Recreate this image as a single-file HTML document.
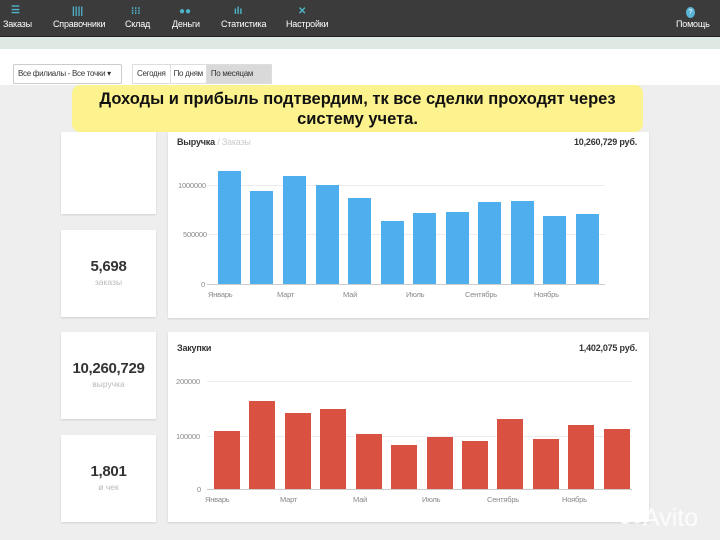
<!DOCTYPE html>
<html><head><meta charset="utf-8"><style>
*{margin:0;padding:0;box-sizing:border-box}
body{width:720px;height:540px;overflow:hidden;background:#eeeeee;font-family:"Liberation Sans",sans-serif;position:relative;color:#333}
.a{position:absolute;white-space:nowrap}
.nav{left:0;top:0;width:720px;height:37px;background:#3b3b3b;border-bottom:1px solid #222}
.ni{position:absolute;top:19px;color:#fff;font-size:9px;white-space:nowrap;letter-spacing:-0.2px}
.ic{position:absolute;top:6px;color:#4fb3c8;font-size:10px;font-weight:bold}
.card{position:absolute;background:#fff;box-shadow:0 1px 2px rgba(0,0,0,.12)}
.big{position:absolute;width:100%;text-align:center;font-weight:bold;font-size:15px;color:#333;letter-spacing:-0.3px}
.sm{position:absolute;width:100%;text-align:center;font-size:8.5px;color:#bbb}
.t{font-size:9px;font-weight:bold;color:#333;letter-spacing:-0.2px}
.ax{position:absolute;font-size:7.5px;color:#888;letter-spacing:-0.2px}
.g{position:absolute;height:1px;background:#ececec}
</style></head><body>
<div class="a nav"></div>
<div class="ic" style="left:11px;top:5px">☰</div><div class="ni" style="left:3px">Заказы</div>
<div class="ic" style="left:72px">||||</div><div class="ni" style="left:53px">Справочники</div>
<div class="ic" style="left:131px">⁝⁝⁝</div><div class="ni" style="left:125px">Склад</div>
<div class="ic" style="left:179px">●●</div><div class="ni" style="left:172px">Деньги</div>
<div class="ic" style="left:234px">ılı</div><div class="ni" style="left:221px">Статистика</div>
<div class="ic" style="left:298px">✕</div><div class="ni" style="left:286px">Настройки</div>
<div class="a" style="left:686px;top:7px;width:9px;height:11px;border-radius:50%;background:#5ab4d6;color:#fff;font-size:7px;text-align:center;line-height:11px">?</div>
<div class="ni" style="left:676px">Помощь</div>
<div class="a" style="left:0;top:37px;width:720px;height:12px;background:#dfe9e4"></div>
<div class="a" style="left:0;top:49px;width:720px;height:36px;background:#fff"></div>
<div class="a" style="left:13px;top:64px;width:109px;height:20px;border:1px solid #ccc;border-radius:2px;font-size:8px;line-height:18px;padding-left:4px;background:#fff;letter-spacing:-0.3px">Все филиалы - Все точки ▾</div>
<div class="a" style="left:132px;top:64px;width:140px;height:20px;border:1px solid #ddd;font-size:8px;line-height:18px;display:flex;letter-spacing:-0.3px">
<span style="padding:0 4px;border-right:1px solid #ddd">Сегодня</span><span style="padding:0 3px;border-right:1px solid #ddd">По дням</span><span style="padding:0 4px;background:#d9d9d9;flex:1">По месяцам</span></div>
<div class="a" style="left:72px;top:85px;width:571px;height:47px;background:#fcf38e;border-radius:8px;text-align:center;font-weight:bold;font-size:16.5px;line-height:20px;padding-top:4px;color:#111">Доходы и прибыль подтвердим, тк все сделки проходят через<br>систему учета.</div>
<div class="card" style="left:61px;top:132px;width:95px;height:82px"></div>
<div class="card" style="left:61px;top:230px;width:95px;height:87px"><div class="big" style="top:28px">5,698</div><div class="sm" style="top:47px">заказы</div></div>
<div class="card" style="left:61px;top:332px;width:95px;height:87px"><div class="big" style="top:28px">10,260,729</div><div class="sm" style="top:47px">выручка</div></div>
<div class="card" style="left:61px;top:435px;width:95px;height:87px"><div class="big" style="top:28px">1,801</div><div class="sm" style="top:47px">ø чек</div></div>
<div class="card" style="left:168px;top:132px;width:481px;height:186px"></div>
<div class="a t" style="left:177px;top:137px">Выручка <span style="color:#ccc;font-weight:normal">/ Заказы</span></div>
<div class="a t" style="left:574px;top:137px">10,260,729 руб.</div>
<div class="g" style="left:207px;top:185px;width:398px"></div>
<div class="g" style="left:207px;top:234px;width:398px"></div>
<div class="a" style="left:207px;top:284px;width:398px;height:1px;background:#ccc"></div>
<div class="ax" style="left:178px;top:181px">1000000</div><div class="ax" style="left:183px;top:230px">500000</div><div class="ax" style="left:201px;top:280px">0</div>
<div class="ax" style="left:208px;top:290px">Январь</div><div class="ax" style="left:277px;top:290px">Март</div><div class="ax" style="left:343px;top:290px">Май</div><div class="ax" style="left:406px;top:290px">Июль</div><div class="ax" style="left:465px;top:290px">Сентябрь</div><div class="ax" style="left:534px;top:290px">Ноябрь</div>
<svg class="a" style="left:0;top:0" width="720" height="540">
<g fill="#4eaeee">
<rect x="218" y="171" width="23" height="113"/><rect x="250" y="191" width="23" height="93"/><rect x="283" y="176" width="23" height="108"/><rect x="316" y="185" width="23" height="99"/><rect x="348" y="198" width="23" height="86"/><rect x="381" y="221" width="23" height="63"/><rect x="413" y="213" width="23" height="71"/><rect x="446" y="212" width="23" height="72"/><rect x="478" y="202" width="23" height="82"/><rect x="511" y="201" width="23" height="83"/><rect x="543" y="216" width="23" height="68"/><rect x="576" y="214" width="23" height="70"/>
</g></svg>
<div class="card" style="left:168px;top:332px;width:481px;height:190px"></div>
<div class="a t" style="left:177px;top:343px">Закупки</div>
<div class="a t" style="left:579px;top:343px">1,402,075 руб.</div>
<div class="g" style="left:207px;top:381px;width:425px"></div>
<div class="g" style="left:207px;top:436px;width:425px"></div>
<div class="a" style="left:207px;top:489px;width:425px;height:1px;background:#ccc"></div>
<div class="ax" style="left:176px;top:377px">200000</div><div class="ax" style="left:176px;top:432px">100000</div><div class="ax" style="left:197px;top:485px">0</div>
<div class="ax" style="left:205px;top:495px">Январь</div><div class="ax" style="left:280px;top:495px">Март</div><div class="ax" style="left:353px;top:495px">Май</div><div class="ax" style="left:422px;top:495px">Июль</div><div class="ax" style="left:487px;top:495px">Сентябрь</div><div class="ax" style="left:562px;top:495px">Ноябрь</div>
<svg class="a" style="left:0;top:0" width="720" height="540">
<g fill="#d85141">
<rect x="214" y="431" width="26" height="58"/><rect x="249" y="401" width="26" height="88"/><rect x="285" y="413" width="26" height="76"/><rect x="320" y="409" width="26" height="80"/><rect x="356" y="434" width="26" height="55"/><rect x="391" y="445" width="26" height="44"/><rect x="427" y="437" width="26" height="52"/><rect x="462" y="441" width="26" height="48"/><rect x="497" y="419" width="26" height="70"/><rect x="533" y="439" width="26" height="50"/><rect x="568" y="425" width="26" height="64"/><rect x="604" y="429" width="26" height="60"/>
</g>
<g fill="#fff" opacity=".85"><circle cx="625" cy="518" r="6"/><circle cx="632" cy="508" r="3.5"/><circle cx="637" cy="520" r="3.5"/><circle cx="622" cy="507" r="2.5"/></g>
<text x="643" y="526" font-family="Liberation Sans" font-size="25" fill="#fff" opacity=".85">Avito</text>
</svg>
</body></html>
